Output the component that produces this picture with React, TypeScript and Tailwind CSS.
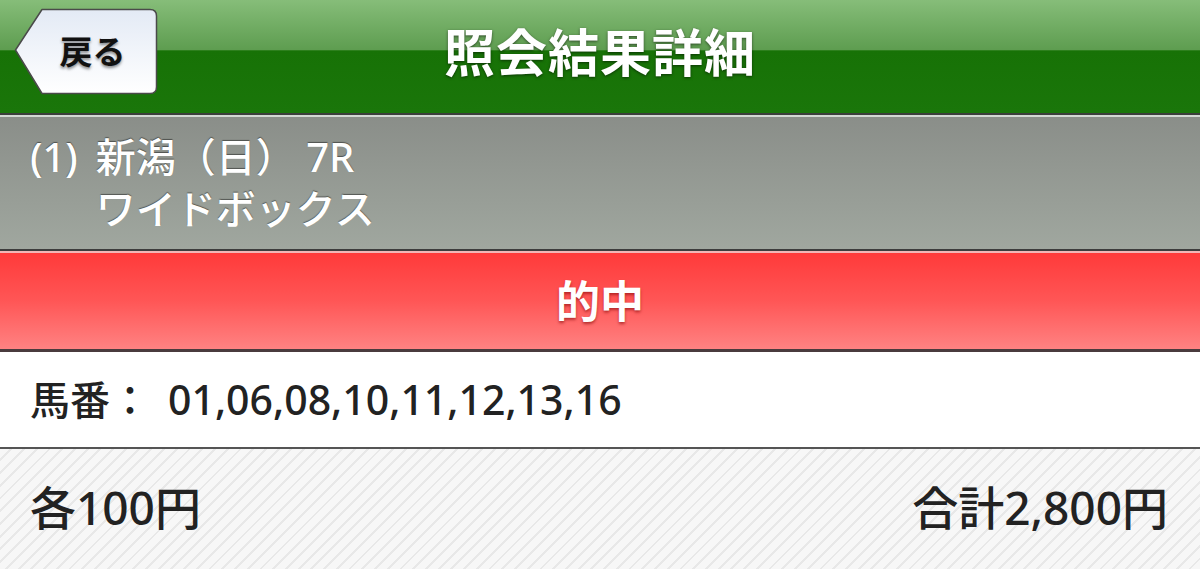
import React from 'react'

const font = "font-['Noto_Sans','Noto_Sans_CJK_JP',sans-serif]"

function BackButton() {
  return (
    <button className="relative w-[144px] h-[87px] mt-[8px] ml-[14px]">
      <svg className="absolute inset-0" width="144" height="87" viewBox="0 0 144 87">
        <defs>
          <linearGradient id="backFill" x1="0" y1="0" x2="0" y2="1">
            <stop offset="0" stopColor="#e3eaf5" />
            <stop offset="1" stopColor="#ffffff" />
          </linearGradient>
        </defs>
        <path
          d="M1.5 42 L28 1.5 H136 Q142.5 1.5 142.5 8 V79 Q142.5 85.5 136 85.5 H28 Z"
          fill="url(#backFill)"
          stroke="#4a4a4a"
          strokeWidth="1.5"
          strokeLinejoin="round"
        />
      </svg>
      <span className="relative block pl-[13px] text-[33px] font-bold text-[#111] [text-shadow:0_2px_3px_rgba(0,0,0,0.45)]">
        戻る
      </span>
    </button>
  )
}

export default function App() {
  const numbers = ['01', '06', '08', '10', '11', '12', '13', '16']

  return (
    <div className={`w-[1200px] h-[570px] overflow-hidden ${font}`}>
      {/* Header */}
      <div className="relative h-[113px] bg-[linear-gradient(180deg,#86bd79_0%,#5e9d50_44%,#177206_45%,#1a760a_100%)]">
        <div className="grid grid-cols-[1fr_auto_1fr] items-start">
          <BackButton />
          <h1 className="pt-[14px] text-[51px] font-bold text-white tracking-[1px] [text-shadow:0_1px_3px_rgba(0,0,0,0.55)]">
            照会結果詳細
          </h1>
          <div />
        </div>
      </div>
      <div className="h-[2px] bg-[#3b3e3b]" />
      <div className="h-[2px] bg-[#d3d9d4]" />

      {/* Race info */}
      <div className="h-[132px] bg-[linear-gradient(180deg,#8a8e89_0%,#a0a79f_100%)] pl-[30px] pt-[14px] flex gap-[18px] text-[40px] leading-[52px] font-medium text-white [text-shadow:0_-1px_1px_rgba(0,0,0,0.45)]">
        <span>(1)</span>
        <div className="flex flex-col">
          <span>新潟（日） 7R</span>
          <span>ワイドボックス</span>
        </div>
      </div>
      <div className="h-[2px] bg-[#3d3d3d]" />
      <div className="h-[2px] bg-[#f2b5b5]" />

      {/* Result */}
      <div className="h-[96px] flex items-center justify-center bg-[linear-gradient(180deg,#ff3a3a_0%,#ff5656_50%,#ff8282_100%)]">
        <span className="text-[44px] font-semibold text-white [text-shadow:0_2px_3px_rgba(120,0,0,0.55)]">的中</span>
      </div>
      <div className="h-[3px] bg-[#4a3b3d]" />

      {/* Horse numbers */}
      <div className="h-[95px] bg-white flex items-center pl-[30px] text-[40px] font-medium text-[#222]">
        <span>馬番：</span>
        <span className="ml-[18px] text-[41px]">{numbers.join(',')}</span>
      </div>
      <div className="h-[2px] bg-[#555]" />

      {/* Totals */}
      <div className="h-[120px] bg-[repeating-linear-gradient(135deg,#f7f7f7_0px,#f7f7f7_7px,#e8e8e8_7px,#e8e8e8_9px)] flex items-center justify-between pl-[30px] pr-[32px] pb-[4px] text-[46px] font-medium text-[#222]">
        <span>各100円</span>
        <span>合計2,800円</span>
      </div>
    </div>
  )
}
